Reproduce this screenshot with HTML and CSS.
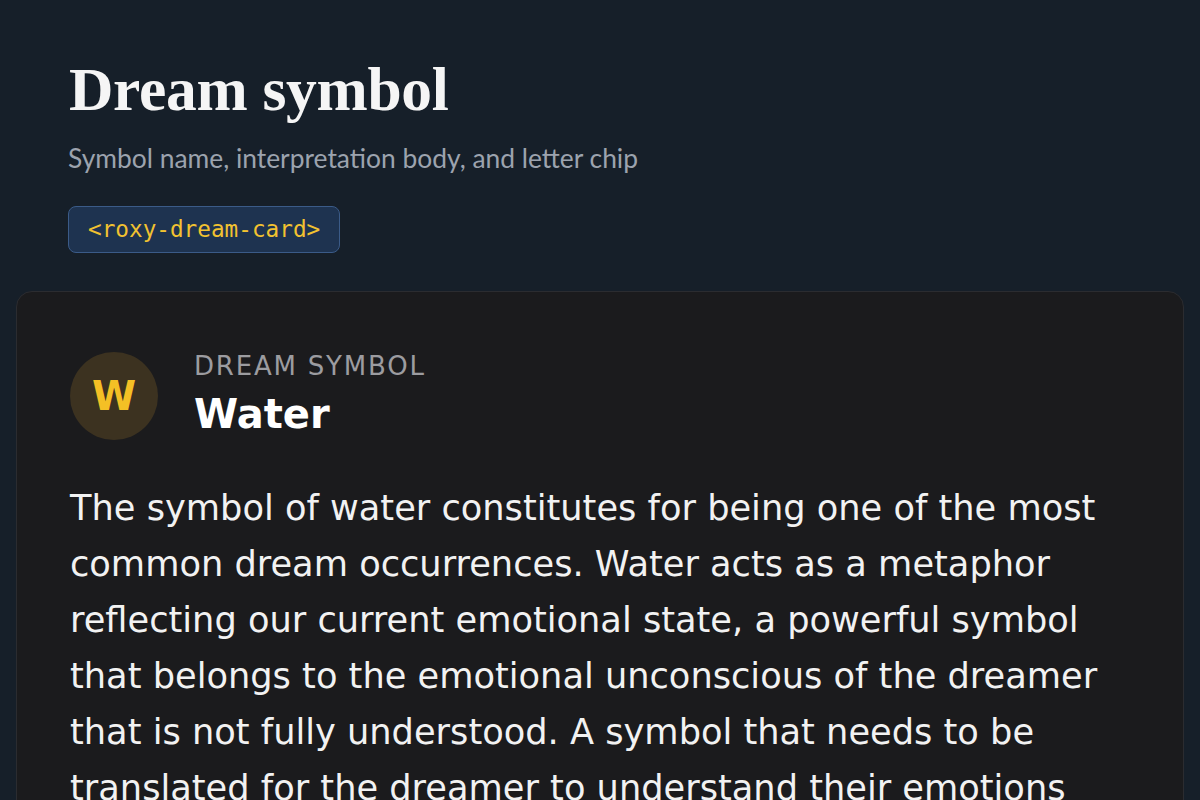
FILE: index.html
```html
<!DOCTYPE html>
<html lang="en">
<head>
    <meta charset="UTF-8">
    <meta name="viewport" content="width=device-width, initial-scale=1.0">
    <title>Dream symbol</title>
    <link rel="stylesheet" href="styles.css">
</head>
<body>
    <header class="page-head">
        <h1>Dream symbol</h1>
        <p class="subtitle">Symbol name, interpretation body, and letter chip</p>
        <span class="tag">&lt;roxy-dream-card&gt;</span>
    </header>
    <article class="dream-card">
        <div class="dream-head">
            <div class="letter-chip">W</div>
            <div class="dream-titles">
                <div class="eyebrow">Dream symbol</div>
                <h2>Water</h2>
            </div>
        </div>
        <p class="dream-body">The symbol of water constitutes for being one of the most common dream occurrences. Water acts as a metaphor reflecting our current emotional state, a powerful symbol that belongs to the emotional unconscious of the dreamer that is not fully understood. A symbol that needs to be translated for the dreamer to understand their emotions better.</p>
    </article>
</body>
</html>
```

FILE: styles.css
```css
body, html {
    margin: 0;
    padding: 0;
    background-color: #161f29;
    font-family: "DejaVu Sans", sans-serif;
    overflow: hidden;
}
.page-head {
    display: flex;
    flex-direction: column;
    align-items: flex-start;
    padding: 53px 68px 0;
}
.page-head h1 {
    margin: 0 0 0 1px;
    font-family: "Liberation Serif", "DejaVu Serif", serif;
    font-size: 61.5px;
    font-weight: 700;
    line-height: 1.2;
    color: #f5f5f5;
    letter-spacing: -0.3px;
}
.subtitle {
    margin: 16px 0 0;
    font-family: Lato, "Open Sans", sans-serif;
    font-size: 26.4px;
    line-height: 1.2;
    font-weight: 400;
    color: #9ca3ae;
}
.tag {
    margin-top: 32px;
    padding: 10px 19px;
    font-family: "DejaVu Sans Mono", "Liberation Mono", monospace;
    font-size: 22.7px;
    line-height: 25px;
    color: #f2c230;
    background: #1e3350;
    border: 1.5px solid #3b5b88;
    border-radius: 8px;
}
.dream-card {
    margin: 38px 16px 0;
    padding: 60px 53px;
    background: #1b1b1d;
    border: 1px solid #2b2c30;
    border-radius: 16px;
}
.dream-head {
    display: flex;
    align-items: center;
    gap: 36px;
}
.letter-chip {
    width: 88px;
    height: 88px;
    flex-shrink: 0;
    border-radius: 50%;
    background: #3c3220;
    color: #f4c025;
    font-size: 40px;
    font-weight: 700;
    display: flex;
    align-items: center;
    justify-content: center;
}
.eyebrow {
    font-size: 26px;
    text-transform: uppercase;
    letter-spacing: 1.8px;
    color: #9c9ca0;
    line-height: 1.2;
}
.dream-titles {
    margin-top: -4px;
}
.dream-titles h2 {
    margin: 8px 0 0;
    font-size: 40px;
    font-weight: 700;
    color: #ffffff;
    line-height: 1.2;
}
.dream-body {
    margin: 40px 0 0;
    font-size: 35.2px;
    line-height: 56px;
    color: #f2f2f2;
}
```
